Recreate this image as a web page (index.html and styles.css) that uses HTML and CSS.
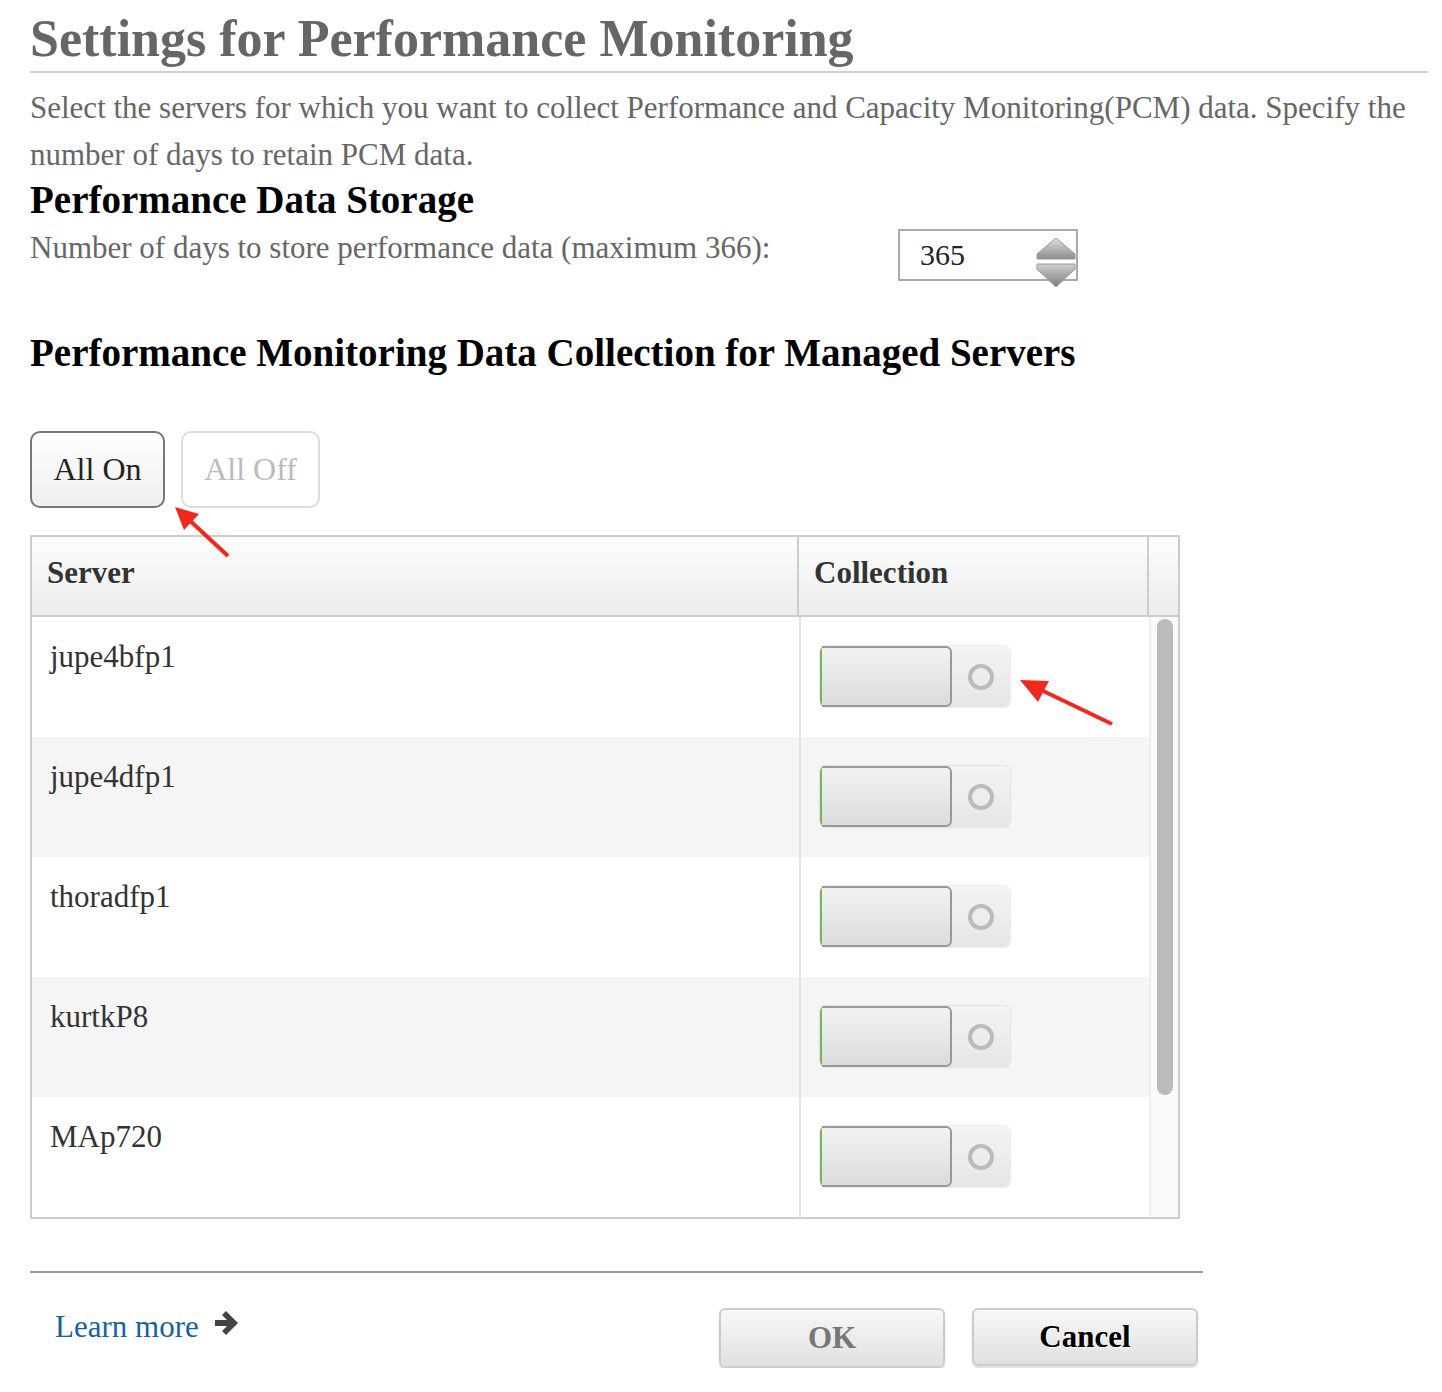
FILE: index.html
```html
<!DOCTYPE html>
<html>
<head>
<meta charset="utf-8">
<link rel="stylesheet" href="styles.css">
</head>
<body>
<div class="page">
  <h1 class="title">Settings for Performance Monitoring</h1>
  <p class="desc">Select the servers for which you want to collect Performance and Capacity Monitoring(PCM) data. Specify the number of days to retain PCM data.</p>
  <h2 class="h2 storage">Performance Data Storage</h2>
  <div class="days-row">
    <span class="days-label">Number of days to store performance data (maximum 366):</span>
    <div class="spinner">
      <span class="spin-val">365</span>
      <svg class="spin-btn" width="44" height="60" viewBox="0 0 44 60">
        <defs>
          <linearGradient id="sg" x1="0" y1="0" x2="0" y2="1">
            <stop offset="0" stop-color="#e0e0e0"/>
            <stop offset="1" stop-color="#8c8c8c"/>
          </linearGradient>
          <linearGradient id="sg2" x1="0" y1="0" x2="0" y2="1">
            <stop offset="0" stop-color="#d0d0d0"/>
            <stop offset="1" stop-color="#7c7c7c"/>
          </linearGradient>
        </defs>
        <path d="M22 2 L41 18 L41 23 L3 23 L3 18 Z" fill="url(#sg)" stroke="#9a9a9a" stroke-width="1"/>
        <path d="M3 28 L41 28 L41 33 L22 51 L3 33 Z" fill="url(#sg2)" stroke="#9a9a9a" stroke-width="1"/>
      </svg>
    </div>
  </div>
  <h2 class="h2 coll">Performance Monitoring Data Collection for Managed Servers</h2>
  <div class="btn-row">
    <button class="pill on">All On</button>
    <button class="pill off">All Off</button>
  </div>
  <div class="table">
    <div class="thead">
      <div class="th c1">Server</div>
      <div class="th c2">Collection</div>
      <div class="th c3"></div>
    </div>
    <div class="tbody">
      <div class="rows">
        <div class="row"><div class="td c1">jupe4bfp1</div><div class="td c2"><span class="toggle"><span class="knob"></span><span class="ring"></span></span></div></div>
        <div class="row alt"><div class="td c1">jupe4dfp1</div><div class="td c2"><span class="toggle"><span class="knob"></span><span class="ring"></span></span></div></div>
        <div class="row"><div class="td c1">thoradfp1</div><div class="td c2"><span class="toggle"><span class="knob"></span><span class="ring"></span></span></div></div>
        <div class="row alt"><div class="td c1">kurtkP8</div><div class="td c2"><span class="toggle"><span class="knob"></span><span class="ring"></span></span></div></div>
        <div class="row"><div class="td c1">MAp720</div><div class="td c2"><span class="toggle"><span class="knob"></span><span class="ring"></span></span></div></div>
      </div>
      <div class="scroll"><div class="thumb"></div></div>
    </div>
  </div>
  <div class="footer">
    <a class="learn">Learn more
      <svg class="learn-arrow" width="28" height="28" viewBox="0 0 28 28"><path d="M13 2 L25 14 L13 26 L9 22 L14 17 L2 17 L2 11 L14 11 L9 6 Z" fill="#444"/></svg>
    </a>
    <div class="actions">
      <button class="act ok">OK</button>
      <button class="act cancel">Cancel</button>
    </div>
  </div>
</div>
<svg class="redarrow a1" width="60" height="56" viewBox="0 0 60 56"><line x1="56" y1="52" x2="14" y2="13" stroke="#f0281e" stroke-width="4"/><path d="M3 3 L27 10 L12 26 Z" fill="#f0281e"/></svg>
<svg class="redarrow a2" width="100" height="50" viewBox="0 0 100 50"><line x1="95" y1="47" x2="20" y2="11" stroke="#f0281e" stroke-width="4"/><path d="M3 3 L32 4 L21 25 Z" fill="#f0281e"/></svg>
</body>
</html>
```
FILE: styles.css
```css
html, body { margin: 0; padding: 0; background: #fff; }
body { font-family: "Liberation Serif", "Times New Roman", serif; position: relative; }
.page { padding: 8px 14px 0 30px; width: 1398px; }
.title { margin: 0; font-size: 52px; line-height: 62px; color: #666; font-weight: bold; border-bottom: 2px solid #d0d0d0; padding-bottom: 1px; }
.desc { margin: 11px 0 0; font-size: 31px; line-height: 47px; color: #666; }
.h2 { margin: 0; font-size: 39px; line-height: 46px; color: #000; font-weight: bold; }
.storage { margin-top: -1px; }
.days-row { display: flex; align-items: flex-start; margin-top: 6px; }
.days-label { font-size: 31px; line-height: 38px; color: #666; width: 868px; }
.spinner { position: relative; width: 176px; height: 48px; border: 2px solid #aaa; display: flex; align-items: center; }
.spin-val { font-size: 30px; color: #222; margin-left: 20px; }
.spin-btn { position: absolute; right: -2px; top: 5px; }
.coll { margin-top: 49px; }
.btn-row { display: flex; gap: 16px; margin-top: 55px; }
.pill { font-family: inherit; font-size: 32px; height: 77px; border-radius: 10px; padding: 0; background: linear-gradient(#fff, #eee); }
.pill.on { width: 135px; border: 2px solid #777; color: #222; }
.pill.off { width: 139px; border: 2px solid #ddd; color: #bbb; background: #fff; }
.table { margin-top: 27px; width: 1146px; border: 2px solid #ccc; }
.thead { display: flex; height: 78px; border-bottom: 2px solid #ccc; background: linear-gradient(#fdfdfd, #ececec); }
.th { font-size: 31px; font-weight: bold; color: #333; display: flex; align-items: center; padding-bottom: 6px; box-sizing: border-box; text-shadow: 1px 1px 0 #fff; }
.c1 { width: 767px; padding-left: 15px; box-sizing: border-box; }
.th.c1 { border-right: 2px solid #ccc; }
.th.c2 { width: 350px; padding-left: 15px; border-right: 2px solid #ccc; }
.th.c3 { flex: 1; }
.tbody { display: flex; }
.rows { width: 1117px; }
.row { display: flex; height: 120px; background: #fff; }
.row.alt { background: #f5f5f5; }
.td { font-size: 31px; color: #333; }
.td.c1 { padding-left: 18px; padding-top: 22px; border-right: 2px solid #e4e4e4; width: 769px; }
.td.c2 { padding-left: 19px; padding-top: 29px; }
.toggle { display: flex; width: 190px; height: 61px; border-radius: 6px; background: linear-gradient(#f4f4f4, #e6e6e6); box-shadow: 0 0 2px #bbb; border-left: 2px solid #7fb05a; box-sizing: border-box; }
.knob { width: 130px; height: 61px; box-sizing: border-box; border: 2px solid #999; border-left: 0; border-radius: 0 6px 6px 0; background: linear-gradient(#f2f2f2, #dcdcdc); }
.ring { width: 18px; height: 18px; border: 4px solid #bbb; border-radius: 50%; margin: 18px 0 0 16px; }
.scroll { flex: 1; background: #fafafa; border-left: 2px solid #eee; display: flex; justify-content: center; padding-top: 2px; }
.thumb { width: 16px; height: 476px; background: #bbb; border-radius: 8px; }
.footer { margin-top: 52px; width: 1173px; border-top: 2px solid #999; display: flex; justify-content: space-between; align-items: flex-start; }
.learn { margin: 36px 0 0 25px; font-size: 31px; color: #1761a0; display: flex; align-items: center; gap: 14px; }
.learn-arrow { margin-top: -8px; }
.actions { display: flex; gap: 27px; margin-top: 35px; margin-right: 5px; }
.act { width: 226px; height: 60px; font-family: inherit; font-size: 31px; font-weight: bold; border: 2px solid #ccc; border-radius: 6px; background: linear-gradient(#f8f8f8, #e0e0e0); box-shadow: 0 2px 2px #ddd; }
.act.ok { color: #777; }
.act.cancel { color: #000; height: 58px; text-shadow: 1px 1px 0 #fff; }
.redarrow { position: absolute; }
.a1 { left: 172px; top: 504px; }
.a2 { left: 1017px; top: 677px; }
```
